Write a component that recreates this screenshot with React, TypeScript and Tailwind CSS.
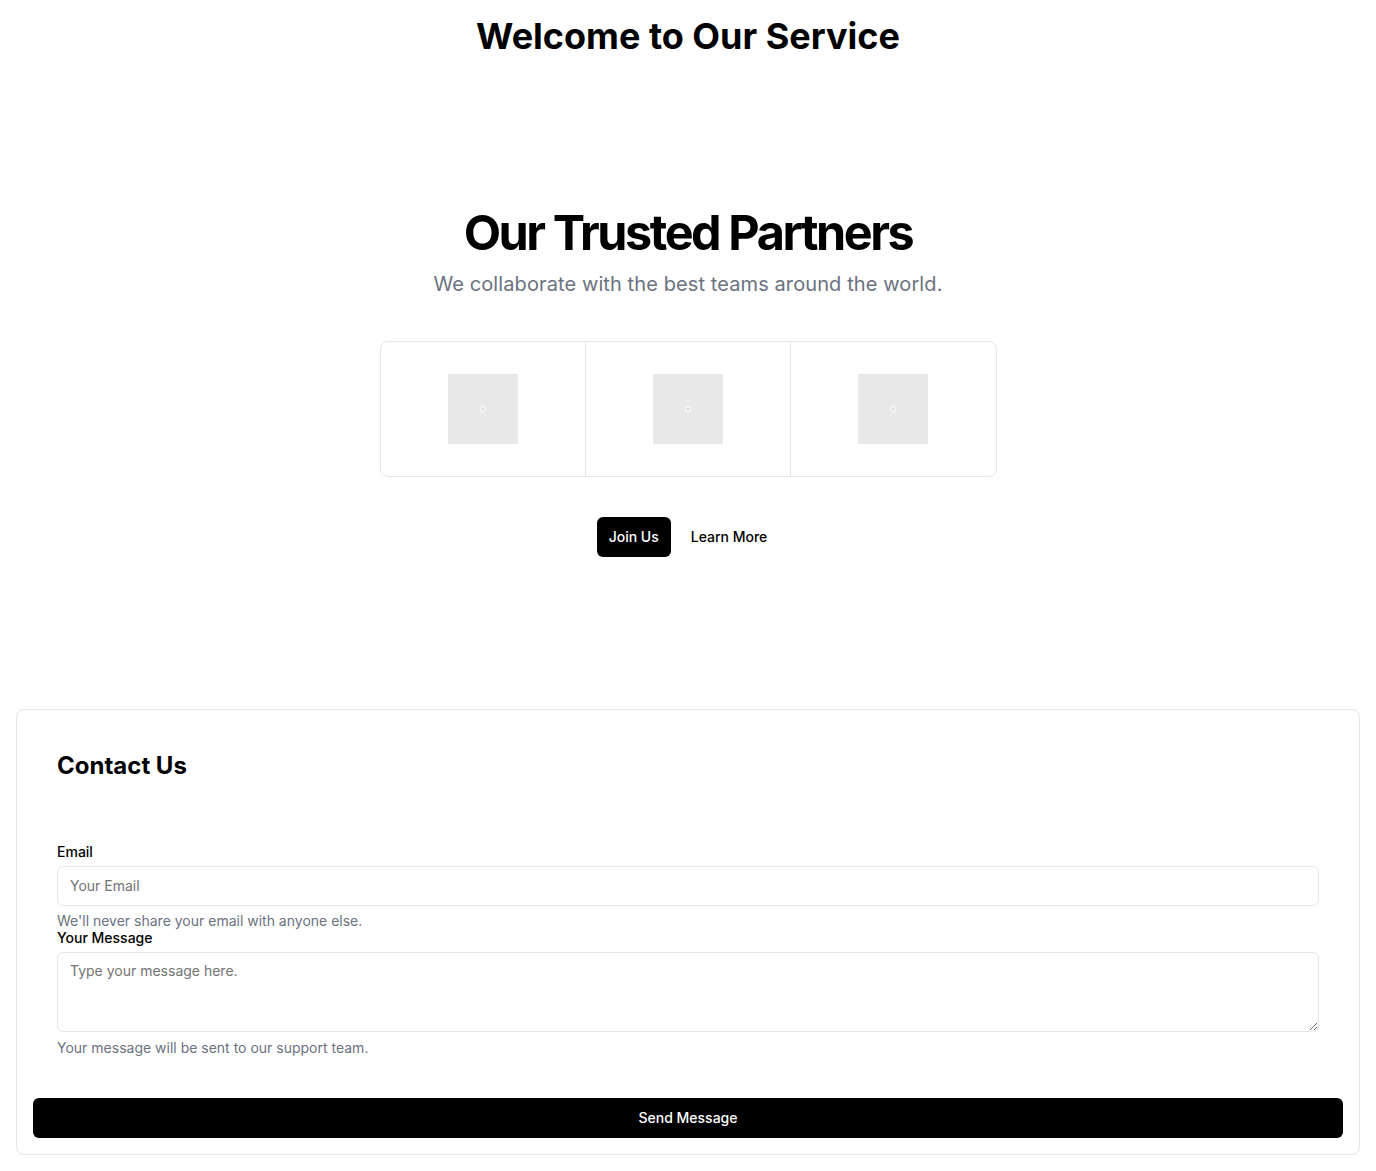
import React from "react";

function Placeholder() {
  return (
    <div className="w-[70px] h-[70px] bg-[#e8e8e8] flex items-center justify-center">
      <svg width="8" height="8" viewBox="0 0 8 8">
        <circle cx="4" cy="4" r="3.5" fill="#f2f2f2" />
        <circle cx="4" cy="4" r="1" fill="#d0d0d0" />
      </svg>
    </div>
  );
}

export default function App() {
  return (
    <div
      className="min-h-screen bg-white text-black px-4"
      style={{ fontFamily: "Inter, 'Noto Sans', sans-serif" }}
    >
      <h1 className="pt-4 text-4xl leading-10 font-bold text-center">Welcome to Our Service</h1>

      <section className="mt-[153px] flex flex-col items-center">
        <h2 className="text-[48.5px] leading-none font-bold tracking-tighter text-center">Our Trusted Partners</h2>
        <p className="mt-3 text-xl leading-7 text-[#6b7280] text-center tracking-[0.005em]">
          We collaborate with the best teams around the world.
        </p>
        <div className="mt-[43px] w-[617px] grid grid-cols-3 border border-[#e5e7eb] rounded-lg divide-x divide-[#e5e7eb]">
          <div className="flex items-center justify-center py-8">
            <Placeholder />
          </div>
          <div className="flex items-center justify-center py-8">
            <Placeholder />
          </div>
          <div className="flex items-center justify-center py-8">
            <Placeholder />
          </div>
        </div>
        <div className="mt-10 flex items-center gap-2">
          <button className="h-10 px-3 rounded-md bg-black text-white text-sm font-medium">Join Us</button>
          <button className="h-10 px-3 rounded-md bg-white text-black text-sm font-medium">Learn More</button>
        </div>
      </section>

      <div className="mt-[152px] border border-[#e5e7eb] rounded-lg bg-white">
        <div className="p-10">
          <h3 className="text-2xl leading-8 font-bold">Contact Us</h3>
          <form className="mt-[63px] flex flex-col" onSubmit={(e) => e.preventDefault()}>
            <label className="text-sm leading-none font-medium mb-[7px]">Email</label>
            <input
              type="email"
              placeholder="Your Email"
              className="h-10 w-full rounded-md border border-[#e5e7eb] px-3 text-sm placeholder:text-[#737373] outline-none"
            />
            <p className="mt-[5px] text-sm leading-5 text-[#6b7280]">We'll never share your email with anyone else.</p>
            <label className="text-sm leading-none font-medium mb-[7px]">Your Message</label>
            <textarea
              placeholder="Type your message here."
              className="h-20 w-full rounded-md border border-[#e5e7eb] px-3 py-2 text-sm placeholder:text-[#737373] outline-none"
            />
            <p className="mt-[6px] text-sm leading-5 text-[#6b7280]">Your message will be sent to our support team.</p>
          </form>
        </div>
        <div className="px-4 pb-4">
          <button className="h-10 w-full rounded-md bg-black text-white text-sm font-medium">Send Message</button>
        </div>
      </div>
    </div>
  );
}
